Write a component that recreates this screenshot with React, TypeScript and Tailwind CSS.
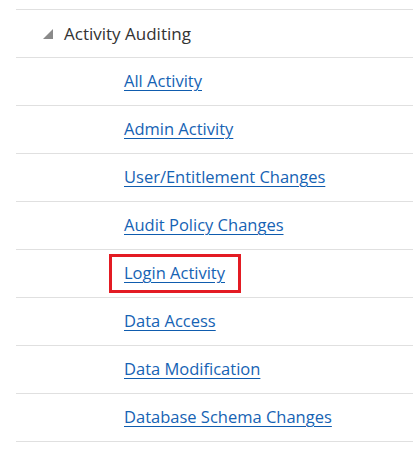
import type { FC } from "react";

const links = [
  "All Activity",
  "Admin Activity",
  "User/Entitlement Changes",
  "Audit Policy Changes",
  "Login Activity",
  "Data Access",
  "Data Modification",
  "Database Schema Changes",
];

const Row: FC<{ label: string; boxed?: boolean }> = ({ label, boxed }) => (
  <li className="flex h-[48px] items-center border-b border-[#e0e0e0]">
    <div
      className={
        boxed
          ? "ml-[93px] flex h-[39px] items-center border-[3px] border-[#e31b23] pl-[12px] pr-[13px]"
          : "ml-[108px] flex items-center"
      }
    >
      <a
        href="#"
        className="text-[16.5px] text-[#1663b4] underline decoration-[#0f5cae] underline-offset-[3px]"
      >
        {label}
      </a>
    </div>
  </li>
);

export default function App() {
  return (
    <div
      className="min-h-[455px] w-[413px] bg-white pl-[16px] pt-[9px]"
      style={{ fontFamily: '"Open Sans", "Noto Sans", sans-serif' }}
    >
      <ul className="border-t border-[#e0e0e0]">
        <li className="flex h-[48px] items-center border-b border-[#e0e0e0]">
          <svg width="10" height="10" viewBox="0 0 10 10" className="ml-[27px] mr-[11px]">
            <polygon points="10,0 10,10 0,10" fill="#8a8a8a" />
          </svg>
          <span className="text-[17px] text-[#333333]">Activity Auditing</span>
        </li>
        {links.map((l) => (
          <Row key={l} label={l} boxed={l === "Login Activity"} />
        ))}
      </ul>
    </div>
  );
}
